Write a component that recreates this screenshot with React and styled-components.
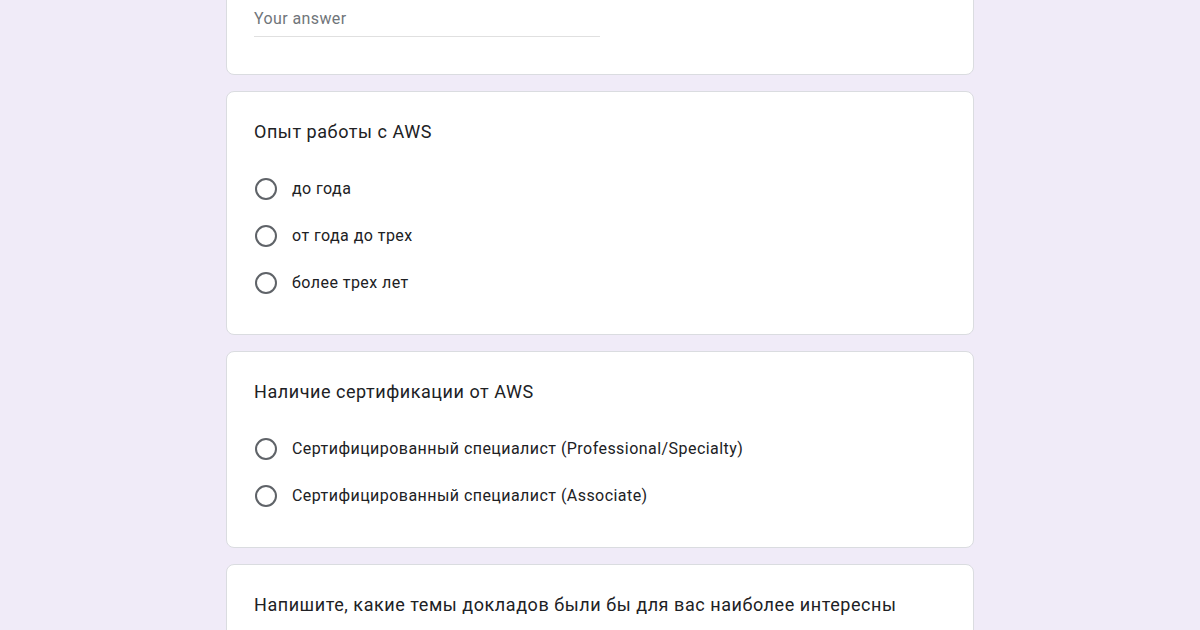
import styled, { createGlobalStyle } from "styled-components";

const GlobalStyle = createGlobalStyle`
  html, body {
    margin: 0;
    padding: 0;
    background: #f0ebf8;
    font-family: Roboto, "Liberation Sans", Arial, sans-serif;
    color: #202124;
  }
  * {
    box-sizing: border-box;
  }
`;

const Page = styled.div`
  width: 100%;
  height: 630px;
  overflow: hidden;
  display: flex;
  justify-content: center;
`;

const Column = styled.div`
  width: 748px;
  display: flex;
  flex-direction: column;
  gap: 16px;
  margin-top: -20px;
`;

const Card = styled.div`
  background: #fff;
  border: 1px solid #dadce0;
  border-radius: 8px;
  padding: 28px 28px 28px 27px;
  flex-shrink: 0;
`;

const QuestionTitle = styled.div`
  font-size: 18px;
  line-height: 24px;
  letter-spacing: 0.55px;
  color: #202124;
`;

const AnswerInput = styled.div`
  width: 346px;
  font-size: 16px;
  line-height: 20px;
  letter-spacing: 0.4px;
  color: #70757a;
  padding-bottom: 7px;
  border-bottom: 1px solid #e0e0e0;
  margin-bottom: 9px;
`;

const Options = styled.div`
  margin-top: 21px;
  display: flex;
  flex-direction: column;
`;

const Option = styled.label`
  height: 47px;
  display: flex;
  align-items: center;
  gap: 15px;
  font-size: 16px;
  letter-spacing: 0.45px;
  color: #202124;
`;

const Radio = styled.span`
  width: 22px;
  height: 22px;
  margin-left: 1px;
  border-radius: 50%;
  border: 2px solid #5f6368;
  flex-shrink: 0;
`;

const questions = [
  {
    title: "Опыт работы с AWS",
    options: ["до года", "от года до трех", "более трех лет"],
  },
  {
    title: "Наличие сертификации от AWS",
    options: [
      "Сертифицированный специалист (Professional/Specialty)",
      "Сертифицированный специалист (Associate)",
    ],
  },
];

function App() {
  return (
    <Page>
      <GlobalStyle />
      <Column>
        <Card>
          <AnswerInput>Your answer</AnswerInput>
        </Card>
        {questions.map((q) => (
          <Card key={q.title}>
            <QuestionTitle>{q.title}</QuestionTitle>
            <Options>
              {q.options.map((o) => (
                <Option key={o}>
                  <Radio />
                  {o}
                </Option>
              ))}
            </Options>
          </Card>
        ))}
        <Card>
          <QuestionTitle>
            Напишите, какие темы докладов были бы для вас наиболее интересны
          </QuestionTitle>
        </Card>
      </Column>
    </Page>
  );
}

export default App;
